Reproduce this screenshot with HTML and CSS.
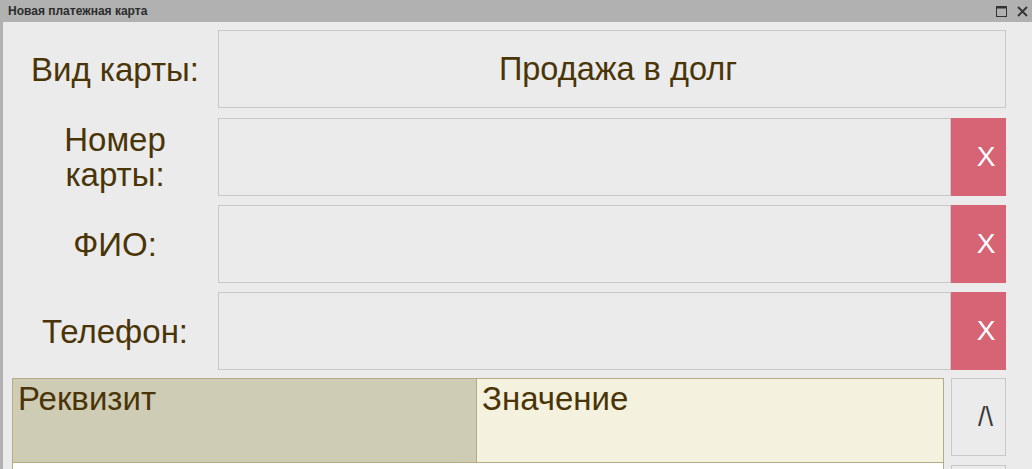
FILE: index.html
```html
<!DOCTYPE html>
<html lang="ru">
<head>
<meta charset="utf-8">
<title>Новая платежная карта</title>
<link rel="stylesheet" href="styles.css">
</head>
<body>
<div class="window">
  <div class="titlebar">
    <span class="title">Новая платежная карта</span>
    <div class="controls">
      <svg class="ctl" width="11" height="11" viewBox="0 0 11 11"><rect x="0.5" y="0.5" width="10" height="10" fill="none" stroke="#333" stroke-width="1"/><rect x="0.5" y="0.5" width="10" height="2" fill="#333"/></svg>
      <svg class="ctl" width="11" height="11" viewBox="0 0 11 11"><path d="M1 1 L10 10 M10 1 L1 10" stroke="#333" stroke-width="1.8"/></svg>
    </div>
  </div>
  <div class="content">
    <div class="row first">
      <div class="label">Вид карты:</div>
      <div class="field wide">Продажа в долг</div>
    </div>
    <div class="row">
      <div class="label">Номер<br>карты:</div>
      <div class="field"></div>
      <div class="clear">X</div>
    </div>
    <div class="row">
      <div class="label">ФИО:</div>
      <div class="field"></div>
      <div class="clear">X</div>
    </div>
    <div class="row">
      <div class="label">Телефон:</div>
      <div class="field"></div>
      <div class="clear">X</div>
    </div>
    <div class="tablearea">
      <div class="table">
        <div class="thead">
          <div class="th th-key">Реквизит</div>
          <div class="th th-val">Значение</div>
        </div>
        <div class="tbody"></div>
      </div>
      <div class="scroll">
        <div class="sbtn">/\</div>
        <div class="sbtn"></div>
      </div>
    </div>
  </div>
</div>
</body>
</html>
```
FILE: styles.css
```css
html, body {
  margin: 0;
  padding: 0;
  overflow: hidden;
}
body {
  width: 1032px;
  height: 469px;
  font-family: "Liberation Sans", Arial, sans-serif;
  background: #ebebeb;
}
.window {
  display: flex;
  flex-direction: column;
  height: 469px;
}
.titlebar {
  height: 22px;
  flex: none;
  background: #b1b1b1;
  display: flex;
  align-items: center;
  justify-content: space-between;
  padding: 0 4px 0 8px;
}
.title {
  font-size: 12px;
  font-weight: bold;
  color: #2c2c2c;
}
.controls {
  display: flex;
  gap: 10px;
  align-items: center;
}
.ctl { display: block; }
.content {
  flex: 1;
  border-left: 3px solid #b1b1b1;
  background: #ebebeb;
  padding: 8px 26px 0 9px;
  display: flex;
  flex-direction: column;
  gap: 9px;
  overflow: hidden;
}
.row {
  display: grid;
  grid-template-columns: 206px 1fr 55px;
  height: 78px;
  flex: none;
}
.row.first {
  margin-bottom: 1px;
}
.label {
  display: flex;
  align-items: center;
  justify-content: center;
  text-align: center;
  font-size: 33px;
  line-height: 35px;
  color: #4a3508;
}
.field {
  border: 1px solid #c8c8c8;
  background: #ebebeb;
  display: flex;
  align-items: center;
  justify-content: center;
  font-size: 32.5px;
  color: #4a3508;
}
.field.wide {
  grid-column: 2 / 4;
  padding-left: 12px;
}
.clear {
  background: #d76475;
  color: #ffffff;
  font-size: 28px;
  display: flex;
  align-items: center;
  justify-content: center;
  padding-left: 15px;
}
.tablearea {
  display: flex;
  gap: 7px;
  flex: 1;
  margin-top: -1px;
}
.table {
  width: 932px;
  flex: none;
  display: flex;
  flex-direction: column;
}
.thead {
  display: grid;
  grid-template-columns: 464px 1fr;
  height: 85px;
  border: 1px solid #b7ab82;
  box-sizing: border-box;
}
.th {
  font-size: 33px;
  color: #4a3508;
  padding: 1px 5px;
}
.th-key {
  background: #cfccb6;
  border-right: 1px solid #b7ab82;
}
.th-val {
  background: #f4f1de;
}
.tbody {
  flex: 1;
  background: #ffffff;
  border-left: 1px solid #b7ab82;
  border-right: 1px solid #b7ab82;
}
.scroll {
  width: 55px;
  display: flex;
  flex-direction: column;
  gap: 9px;
}
.sbtn {
  height: 78px;
  flex: none;
  box-sizing: border-box;
  border: 1px solid #c8c8c8;
  background: #ebebeb;
  display: flex;
  align-items: center;
  justify-content: center;
  padding-left: 14px;
  font-size: 27px;
  color: #3a3a3a;
}
```
